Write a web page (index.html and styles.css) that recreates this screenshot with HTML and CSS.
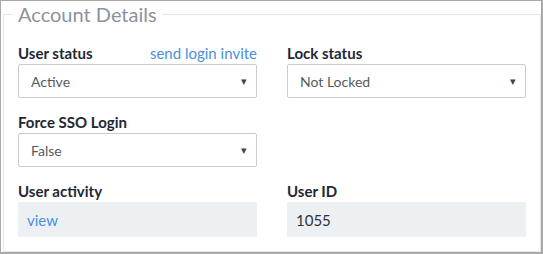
FILE: index.html
```html
<!DOCTYPE html>
<html lang="en">
<head>
    <meta charset="UTF-8">
    <title>Account Details</title>
    <link rel="stylesheet" href="styles.css">
</head>
<body>

    <div class="frame">
        <fieldset class="account">
            <legend>Account Details</legend>
            <div class="grid">
                <div class="field">
                    <div class="label-row">
                        <label for="userStatus">User status</label>
                        <a href="#" class="link">send login invite</a>
                    </div>
                    <div class="select">
                        <span>Active</span>
                        <span class="arrow">&#9662;</span>
                    </div>
                </div>
                <div class="field">
                    <div class="label-row">
                        <label for="lockStatus">Lock status</label>
                    </div>
                    <div class="select">
                        <span>Not Locked</span>
                        <span class="arrow">&#9662;</span>
                    </div>
                </div>
                <div class="field">
                    <div class="label-row">
                        <label>Force SSO Login</label>
                    </div>
                    <div class="select">
                        <span>False</span>
                        <span class="arrow">&#9662;</span>
                    </div>
                </div>
                <div class="field"></div>
                <div class="field">
                    <div class="label-row">
                        <label>User activity</label>
                    </div>
                    <div class="readonly"><a href="#" class="link">view</a></div>
                </div>
                <div class="field">
                    <div class="label-row">
                        <label>User ID</label>
                    </div>
                    <div class="readonly">1055</div>
                </div>
            </div>
        </fieldset>
    </div>

</body>
</html>
```

FILE: styles.css
```css
/* Page */
body {
    margin: 0;
    font-family: 'Lato', 'Liberation Sans', sans-serif;
    background: #ffffff;
    color: #222b38;
}

.frame {
    box-sizing: border-box;
    width: 543px;
    height: 254px;
    border: 1px solid #a9a9a9;
    border-right-width: 2px;
    border-bottom-width: 2px;
    padding: 1px 1px 1px 2px;
}

/* Fieldset */
.account {
    box-sizing: border-box;
    height: 250px;
    margin: 0;
    border: 1px solid #e6e6e6;
    padding: 0 9px;
}

.account legend {
    padding: 0 5px;
    font-size: 20px;
    line-height: 24px;
    color: #8c939b;
}

/* Grid of fields */
.grid {
    display: grid;
    grid-template-columns: 239px 239px;
    column-gap: 30px;
    row-gap: 14px;
    padding: 17px 5px 0 5px;
}

.label-row {
    display: flex;
    justify-content: space-between;
    align-items: baseline;
    height: 20px;
    margin-bottom: 1px;
}

.label-row label {
    font-size: 15px;
    font-weight: bold;
    line-height: 20px;
    color: #1f2733;
}

.link {
    font-size: 15px;
    color: #4a90d9;
    text-decoration: none;
}

.select {
    box-sizing: border-box;
    display: flex;
    justify-content: space-between;
    align-items: center;
    height: 34px;
    padding: 0 9px 0 12px;
    border: 1px solid #cccccc;
    border-radius: 2px;
    font-size: 14px;
    color: #555a60;
}

.arrow {
    font-size: 11px;
    color: #444;
}

.readonly {
    box-sizing: border-box;
    height: 35px;
    padding: 0 9px;
    display: flex;
    align-items: center;
    background: #edf0f3;
    font-size: 15px;
    color: #2b333d;
}
```
